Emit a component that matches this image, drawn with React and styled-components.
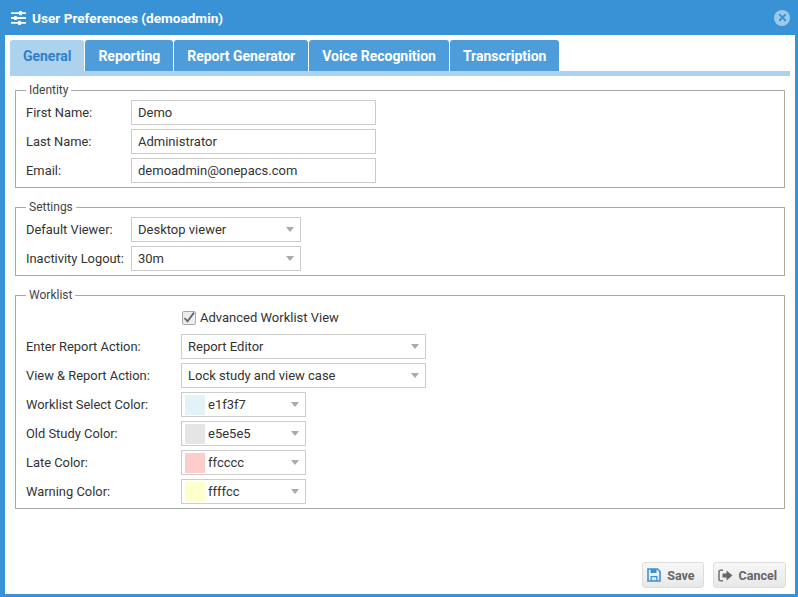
import React from 'react'
import styled, { createGlobalStyle } from 'styled-components'
import { X } from 'lucide-react'

const Global = createGlobalStyle`
  html, body { margin: 0; padding: 0; background: #fff; }
  body { font-family: Roboto, "Liberation Sans", sans-serif; font-size: 13px; color: #333; }
`

const tabs = ['General', 'Reporting', 'Report Generator', 'Voice Recognition', 'Transcription']

const colors = [
  { label: 'Worklist Select Color:', value: 'e1f3f7' },
  { label: 'Old Study Color:', value: 'e5e5e5' },
  { label: 'Late Color:', value: 'ffcccc' },
  { label: 'Warning Color:', value: 'ffffcc' },
]

const SlidersIcon = () => (
  <svg width="15" height="14" viewBox="0 0 15 14" fill="#fff">
    <rect x="0" y="1.2" width="15" height="1.8" rx="0.6" />
    <rect x="8" y="0" width="3" height="4.2" rx="0.8" />
    <rect x="0" y="6.1" width="15" height="1.8" rx="0.6" />
    <rect x="3" y="4.9" width="3" height="4.2" rx="0.8" />
    <rect x="0" y="11" width="15" height="1.8" rx="0.6" />
    <rect x="7" y="9.8" width="3" height="4.2" rx="0.8" />
  </svg>
)

const SaveIcon = () => (
  <svg width="14" height="14" viewBox="0 0 14 14">
    <path d="M1 1h9.5L13 3.5V13H1z" fill="none" stroke="#3a92d6" strokeWidth="1.6" />
    <rect x="3.5" y="1" width="6" height="4" fill="#3a92d6" />
    <rect x="3.5" y="8" width="7" height="5" fill="#3a92d6" />
    <rect x="4.8" y="9.2" width="4.4" height="3" fill="#dbeaf6" />
  </svg>
)

const CancelIcon = () => (
  <svg width="15" height="13" viewBox="0 0 15 13">
    <path d="M5 1.2H2.2Q1 1.2 1 2.4v8.2q0 1.2 1.2 1.2H5" fill="none" stroke="#777" strokeWidth="1.6" />
    <path d="M4.5 4.4h4V1.4l6 5.1-6 5.1V8.6h-4z" fill="#666" />
  </svg>
)

const SelectBox = ({ width, children }) => (
  <Select $width={width}>
    {children}
    <Caret />
  </Select>
)

const App = () => {
  return (
    <Dialog>
      <Global />
      <TitleBar>
        <SlidersIcon />
        <Title>User Preferences (demoadmin)</Title>
        <CloseButton><X size={11} strokeWidth={4} color="#3a92d6" /></CloseButton>
      </TitleBar>
      <Body>
        <TabBar>
          {tabs.map((t, i) => <Tab key={t} $active={i === 0}>{t}</Tab>)}
        </TabBar>
        <Panel>
          <Group>
            <Legend>Identity</Legend>
            <Row $label={105}><Label>First Name:</Label><Input defaultValue="Demo" /></Row>
            <Row $label={105}><Label>Last Name:</Label><Input defaultValue="Administrator" /></Row>
            <Row $label={105}><Label>Email:</Label><Input defaultValue="demoadmin@onepacs.com" /></Row>
          </Group>
          <Group>
            <Legend>Settings</Legend>
            <Row $label={105}><Label>Default Viewer:</Label><SelectBox width={170}>Desktop viewer</SelectBox></Row>
            <Row $label={105}><Label>Inactivity Logout:</Label><SelectBox width={170}>30m</SelectBox></Row>
          </Group>
          <Group>
            <Legend>Worklist</Legend>
            <CheckRow>
              <CheckBox>
                <svg width="12" height="12" viewBox="0 0 12 12"><path d="M1.5 6l3 3.4L11 .6" fill="none" stroke="#666" strokeWidth="1.8" /></svg>
              </CheckBox>
              Advanced Worklist View
            </CheckRow>
            <Row $label={155}><Label>Enter Report Action:</Label><SelectBox width={245}>Report Editor</SelectBox></Row>
            <Row $label={155}><Label>View &amp; Report Action:</Label><SelectBox width={245}>Lock study and view case</SelectBox></Row>
            {colors.map(c => (
              <Row $label={155} key={c.value}>
                <Label>{c.label}</Label>
                <SelectBox width={125}><Swatch $color={`#${c.value}`} />{c.value}</SelectBox>
              </Row>
            ))}
          </Group>
        </Panel>
        <Footer>
          <Button><SaveIcon />Save</Button>
          <Button><CancelIcon />Cancel</Button>
        </Footer>
      </Body>
    </Dialog>
  )
}

const Dialog = styled.div`
width: 798px;
height: 597px;
background: #3a92d6;
padding: 0 3px 3px 5px;
box-sizing: border-box;
display: flex;
flex-direction: column;
`

const TitleBar = styled.div`
height: 35px;
flex: none;
display: flex;
align-items: center;
gap: 6px;
padding: 0 5px 0 6px;
color: #fff;
`

const Title = styled.div`
flex: 1;
font-weight: 700;
font-size: 13.6px;
`

const CloseButton = styled.div`
width: 16px;
height: 16px;
border-radius: 50%;
background: #9cc8ea;
display: flex;
align-items: center;
justify-content: center;
`

const Body = styled.div`
flex: 1;
background: #fff;
padding: 5px 5px 0;
display: flex;
flex-direction: column;
min-height: 0;
`

const TabBar = styled.div`
display: flex;
height: 31px;
flex: none;
gap: 1px;
border-bottom: 5px solid #acd2ee;
`

const Tab = styled.div`
height: 31px;
padding: 0 13px;
display: flex;
align-items: center;
font-weight: 700;
font-size: 14px;
letter-spacing: -0.03px;
border-radius: 3px 3px 0 0;
background: ${({ $active }) => ($active ? '#acd2ee' : '#4e9dda')};
color: ${({ $active }) => ($active ? '#2c82c9' : '#fff')};
`

const Panel = styled.div`
flex: 1;
padding: 7px 5px 0;
display: flex;
flex-direction: column;
gap: 12px;
`

const Group = styled.fieldset`
margin: 0;
padding: 1px 10px 2px 10px;
border: 1px solid #aaa;
min-width: 0;
`

const Legend = styled.legend`
padding: 0 3px;
font-size: 12px;
line-height: 14px;
color: #444;
`

const Row = styled.div`
display: grid;
grid-template-columns: ${({ $label }) => $label}px auto;
justify-content: start;
align-items: center;
height: 29px;
`

const Label = styled.label`
font-size: 12.9px;
color: #333;
white-space: nowrap;
`

const Input = styled.input`
width: 245px;
height: 25px;
box-sizing: border-box;
border: 1px solid #ccc;
padding: 0 6px;
font: 13px Roboto, sans-serif;
color: #333;
outline: none;
`

const Select = styled.div`
position: relative;
width: ${({ $width }) => $width}px;
height: 25px;
box-sizing: border-box;
border: 1px solid #ccc;
padding: 0 6px;
display: flex;
align-items: center;
font-size: 13px;
color: #333;
`

const Caret = styled.span`
position: absolute;
right: 6px;
top: 9px;
border-left: 4.5px solid transparent;
border-right: 4.5px solid transparent;
border-top: 5px solid #aaa;
`

const Swatch = styled.span`
width: 20px;
height: 20px;
margin: 0 3px 0 -3px;
background: ${({ $color }) => $color};
`

const CheckRow = styled.div`
height: 29px;
padding-left: 156px;
display: flex;
align-items: center;
gap: 4px;
font-size: 13px;
color: #333;
`

const CheckBox = styled.span`
width: 12px;
height: 12px;
border: 1px solid #aaa;
border-radius: 2px;
background: #eee;
display: flex;
`

const Footer = styled.div`
flex: none;
display: flex;
justify-content: flex-end;
gap: 9px;
padding: 0 4px 6px 0;
`

const Button = styled.div`
height: 24px;
padding: 0 8px 0 4px;
display: flex;
align-items: center;
gap: 6px;
border: 1px solid #ddd;
border-radius: 3px;
background: linear-gradient(#f8f8f8, #e8e8e8);
font-weight: 700;
font-size: 12.5px;
color: #666;
`

export default App
